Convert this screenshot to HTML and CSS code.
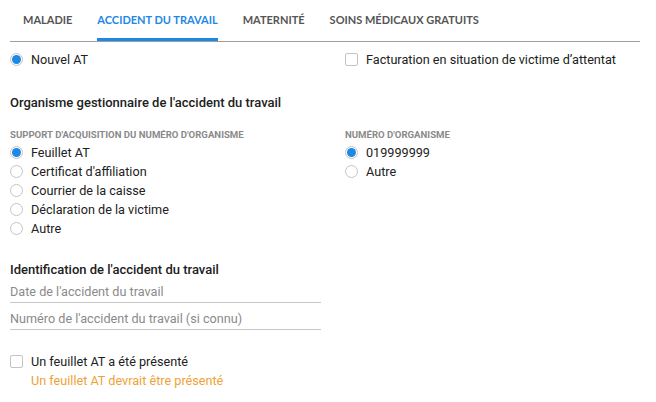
FILE: index.html
```html
<!DOCTYPE html>
<html lang="fr">
<head>
<meta charset="utf-8">
<link rel="stylesheet" href="styles.css">
</head>
<body>
<div class="page">
  <nav class="tabs">
    <span class="tab">Maladie</span>
    <span class="tab active">Accident du travail</span>
    <span class="tab">Maternité</span>
    <span class="tab">Soins médicaux gratuits</span>
  </nav>

  <div class="grid top-row">
    <label class="opt"><span class="radio checked"></span>Nouvel AT</label>
    <label class="opt"><span class="check"></span>Facturation en situation de victime d’attentat</label>
  </div>

  <h2 class="heading h-org">Organisme gestionnaire de l'accident du travail</h2>

  <div class="grid groups">
    <div class="group">
      <div class="label">Support d'acquisition du numéro d'organisme</div>
      <label class="opt"><span class="radio checked"></span>Feuillet AT</label>
      <label class="opt"><span class="radio"></span>Certificat d'affiliation</label>
      <label class="opt"><span class="radio"></span>Courrier de la caisse</label>
      <label class="opt"><span class="radio"></span>Déclaration de la victime</label>
      <label class="opt"><span class="radio"></span>Autre</label>
    </div>
    <div class="group">
      <div class="label">Numéro d'organisme</div>
      <label class="opt"><span class="radio checked"></span>019999999</label>
      <label class="opt"><span class="radio"></span>Autre</label>
    </div>
  </div>

  <h2 class="heading h-id">Identification de l'accident du travail</h2>
  <div class="field">Date de l'accident du travail</div>
  <div class="field field2">Numéro de l'accident du travail (si connu)</div>

  <label class="opt presented"><span class="check"></span>Un feuillet AT a été présenté</label>
  <div class="warn">Un feuillet AT devrait être présenté</div>
</div>
</body>
</html>
```

FILE: styles.css
```css
* { box-sizing: border-box; }
html, body { margin: 0; padding: 0; background: #fff; }
body {
  font-family: Roboto, "Liberation Sans", sans-serif;
  font-size: 12.65px;
  color: #212121;
}
.page {
  padding: 0 16px 0 10px;
}
.tabs {
  display: flex;
  border-bottom: 1px solid #9e9e9e;
  padding-left: 13px;
  height: 42px;
}
.tab {
  font-family: Lato, "Liberation Sans", sans-serif;
  font-weight: 700;
  font-size: 11px;
  text-transform: uppercase;
  color: #555;
  padding-top: 12px;
  line-height: 15px;
  margin-right: 25px;
  height: 41px;
  border-bottom: 3px solid transparent;
}
.tab.active {
  color: #1e88e5;
  border-bottom-color: #1e88e5;
}
.grid {
  display: grid;
  grid-template-columns: 335px 1fr;
}
.top-row { margin-top: 8px; }
.opt {
  display: flex;
  align-items: center;
  height: 19px;
  line-height: 19px;
}
.radio {
  width: 13px;
  height: 13px;
  border: 1px solid #c4c4c4;
  border-radius: 50%;
  margin-right: 8px;
  flex: none;
  display: flex;
  align-items: center;
  justify-content: center;
}
.radio.checked::after {
  content: "";
  width: 9px;
  height: 9px;
  border-radius: 50%;
  background: #1e88e5;
}
.check {
  width: 13px;
  height: 13px;
  border: 1px solid #c4c4c4;
  border-radius: 2px;
  margin-right: 8px;
  flex: none;
}
.heading {
  margin: 0;
  font-size: 13px;
  font-weight: 500;
  line-height: 18px;
  color: #212121;
}
.h-org { margin-top: 25px; }
.label {
  font-size: 9.6px;
  font-weight: 700;
  text-transform: uppercase;
  color: #8a8a8a;
  line-height: 12px;
  margin-bottom: 2px;
}
.groups { margin-top: 17px; }
.h-id { margin-top: 23px; }
.field {
  width: 311px;
  line-height: 18px;
  padding-bottom: 1px;
  border-bottom: 1px solid #c8c8c8;
  color: #8a8a8a;
  margin-top: 4px;
}
.field2 { margin-top: 7px; }
.presented { margin-top: 22px; }
.warn {
  color: #eea236;
  line-height: 19px;
  padding-left: 21px;
}
```
